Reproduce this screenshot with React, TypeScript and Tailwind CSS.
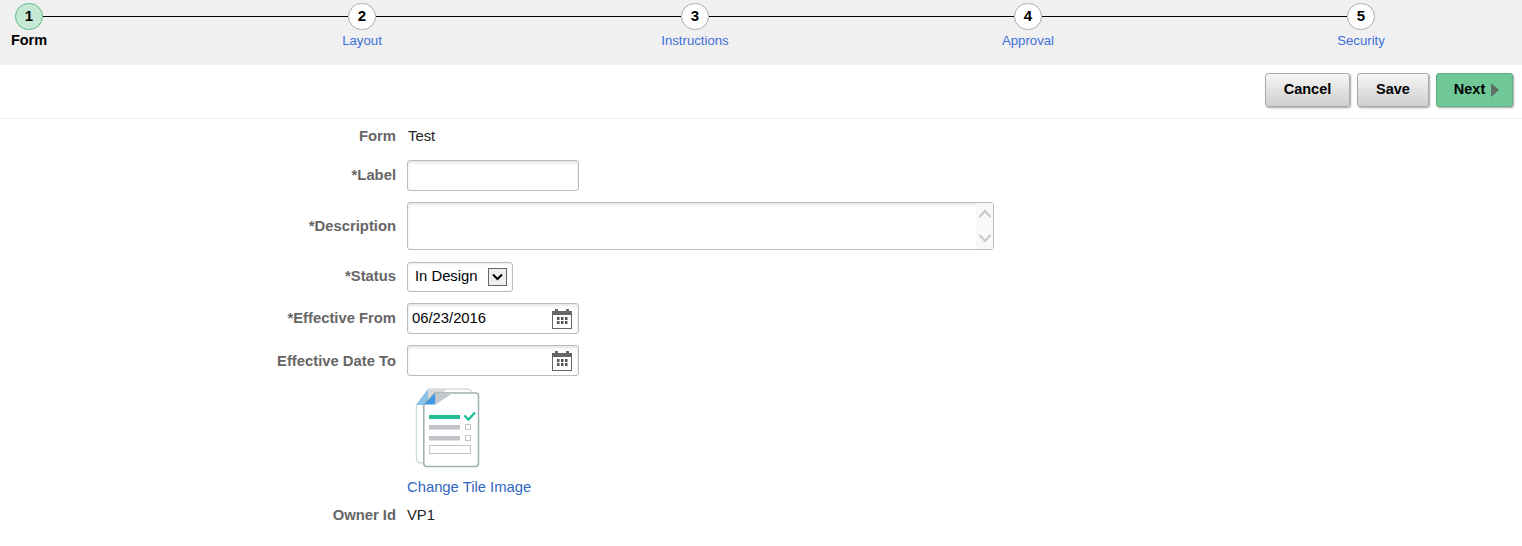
import React from "react";

const font = { fontFamily: '"Liberation Sans", Arial, sans-serif' };

function Step({ n, label, active, last }: { n: number; label: string; active?: boolean; last?: boolean }) {
  return (
    <div className={last ? "flex w-[28px] items-start" : "flex w-[333px] items-start"}>
      <div className="flex w-[28px] shrink-0 flex-col items-center">
        <div
          className={
            active
              ? "flex h-[27px] w-[28px] items-center justify-center rounded-full border border-[#62b98a] bg-[#c4e8d3] text-[15px] font-bold text-black"
              : "flex h-[27px] w-[28px] items-center justify-center rounded-full border border-[#aaaaaa] bg-white text-[15px] font-bold text-black"
          }
        >
          {n}
        </div>
        <div
          className={
            active
              ? "mt-[1px] whitespace-nowrap text-[14.5px] leading-[18px] font-bold text-black"
              : "mt-[2px] whitespace-nowrap text-[13.2px] leading-[18px] text-[#3f6fd8]"
          }
        >
          {label}
        </div>
      </div>
      {!last && <div className="mt-[13px] h-px flex-1 bg-black" />}
    </div>
  );
}

function Button({ children, wide, primary }: { children: React.ReactNode; wide: string; primary?: boolean }) {
  return (
    <div
      className={
        (primary
          ? "border-[#5fae84] bg-[#6fc896] pl-[4px] "
          : "border-[#aaaaaa] bg-gradient-to-b from-[#f6f6f6] to-[#cfcfcf] ") +
        "flex h-[34px] items-center justify-center rounded-[3px] border text-[14.5px] font-bold text-black shadow-[1px_1px_2px_rgba(0,0,0,0.35)] " +
        wide
      }
    >
      {children}
    </div>
  );
}

function Row({
  label,
  children,
  className,
  labelClass = "",
}: {
  label?: string;
  children: React.ReactNode;
  className: string;
  labelClass?: string;
}) {
  return (
    <div className={"flex items-center " + className}>
      <div className={"w-[396px] shrink-0 text-right text-[14.8px] font-bold text-[#666666] " + labelClass}>{label}</div>
      <div className="ml-[11px]">{children}</div>
    </div>
  );
}

function Calendar() {
  return (
    <svg width="20" height="20" viewBox="0 0 20 20" className="shrink-0">
      <rect x="0.5" y="2.5" width="19" height="17" fill="#fff" stroke="#666" />
      <rect x="0" y="2" width="20" height="4" fill="#666" />
      <rect x="3" y="0" width="3" height="3" fill="#666" />
      <rect x="14" y="0" width="3" height="3" fill="#666" />
      {[5, 9, 13].map((x) =>
        [8, 12].map((y) => <rect key={x + "-" + y} x={x} y={y} width="2.5" height="3" fill="#555" />)
      )}
    </svg>
  );
}

function DateField({ value }: { value?: string }) {
  return (
    <div className="flex h-[31px] w-[172px] items-center justify-between rounded-[3px] border border-[#bbbbbb] pr-[6px] pl-[4px] text-[14.8px] text-black shadow-[inset_0_2px_3px_rgba(0,0,0,0.1)]">
      <span>{value}</span>
      <Calendar />
    </div>
  );
}

function TileImage() {
  return (
    <svg width="80" height="80" viewBox="0 0 80 80" className="block">
      <path d="M9.5 17.5 L22 1 H60 Q64.5 1 64.5 5 V71 Q64.5 75 60 75 H14 Q9.5 75 9.5 71 Z" fill="#fff" stroke="#d3dcdc" strokeWidth="1.5" />
      <path d="M9 17 L21 1 V17 Z" fill="#8cc1ea" />
      <path d="M21 1 H40 L21 17 Z" fill="#d5d8dc" />
      <path d="M16.8 17 L28 5 H68.5 Q71.5 5 71.5 8 V75.5 Q71.5 78.5 68.5 78.5 H19.8 Q16.8 78.5 16.8 75.5 Z" fill="#fff" stroke="#9fb0ae" strokeWidth="1.5" />
      <path d="M17 16.5 L28.5 5 V16.5 Z" fill="#3f97e0" />
      <path d="M28.5 5 H46 L28.5 16.5 Z" fill="#c3c8cd" />
      <rect x="22" y="27" width="31" height="4" fill="#20bd97" />
      <path d="M57.5 27.5 L61.5 31.5 L68 24.5" fill="none" stroke="#20bd97" strokeWidth="2.4" />
      <rect x="22" y="37" width="31" height="4.5" fill="#c0c4c9" />
      <rect x="22" y="48" width="31" height="4.5" fill="#c0c4c9" />
      <rect x="58.5" y="36.5" width="5" height="5" fill="#fff" stroke="#c0c4c9" />
      <rect x="58.5" y="47.5" width="5" height="5" fill="#fff" stroke="#c0c4c9" />
      <rect x="22.5" y="57.5" width="41" height="8" fill="#fff" stroke="#c0c4c9" />
    </svg>
  );
}

export default function App() {
  return (
    <div className="min-h-[546px] bg-white text-black" style={font}>
      <div className="flex h-[65px] bg-[#f0f0f0] pt-[3px] pl-[15px]">
        <Step n={1} label="Form" active />
        <Step n={2} label="Layout" />
        <Step n={3} label="Instructions" />
        <Step n={4} label="Approval" />
        <Step n={5} label="Security" last />
      </div>
      <div className="flex h-[54px] justify-end gap-[7px] border-b border-[#eeeeee] pt-[8px] pr-[9px]">
        <Button wide="w-[85px]">Cancel</Button>
        <Button wide="w-[72px]">Save</Button>
        <Button wide="w-[77px]" primary>
          Next
          <svg width="8" height="14" viewBox="0 0 8 14" className="ml-[6px]">
            <path d="M0 0 L8 7 L0 14 Z" fill="#5f6f66" />
          </svg>
        </Button>
      </div>
      <Row label="Form" className="mt-[7px] h-[20px]">
        <span className="pl-px text-[14.8px] text-[#222222]">Test</span>
      </Row>
      <Row label="*Label" className="mt-[14px]">
        <div className="h-[31px] w-[172px] rounded-[3px] border border-[#bbbbbb] shadow-[inset_0_2px_3px_rgba(0,0,0,0.1)]" />
      </Row>
      <Row label="*Description" className="mt-[11px]">
        <div className="flex h-[48px] w-[587px] justify-end rounded-[3px] border border-[#bbbbbb] shadow-[inset_0_2px_3px_rgba(0,0,0,0.1)]">
          <div className="flex w-[17px] flex-col items-center justify-between bg-[#f8f8f8] py-[6px]">
            <svg width="14" height="10" viewBox="0 0 14 10">
              <path d="M1.5 8 L7 2 L12.5 8" fill="none" stroke="#c8c8c8" strokeWidth="2" />
            </svg>
            <svg width="14" height="10" viewBox="0 0 14 10">
              <path d="M1.5 2 L7 8 L12.5 2" fill="none" stroke="#c8c8c8" strokeWidth="2" />
            </svg>
          </div>
        </div>
      </Row>
      <Row label="*Status" className="mt-[12px]" labelClass="pb-[2px]">
        <div className="flex h-[30px] w-[106px] items-center justify-between rounded-[3px] border border-[#bbbbbb] pr-[5px] pl-[7px] text-[14.8px] text-black shadow-[inset_0_1px_2px_rgba(0,0,0,0.08)]">
          <span className="pb-[2px]">In Design</span>
          <div className="flex h-[18px] w-[19px] items-center justify-center border border-[#666666] bg-[#eeeeee]">
            <svg width="11" height="8" viewBox="0 0 11 8">
              <path d="M1 1.5 L5.5 6 L10 1.5" fill="none" stroke="#000" strokeWidth="2" />
            </svg>
          </div>
        </div>
      </Row>
      <Row label="*Effective From" className="mt-[11px]">
        <DateField value="06/23/2016" />
      </Row>
      <Row label="Effective Date To" className="mt-[11px]" labelClass="pt-[2px]">
        <DateField />
      </Row>
      <div className="mt-[12px] ml-[407px]">
        <TileImage />
      </div>
      <div className="mt-[10px] ml-[407px] text-[14.8px] leading-[18px] text-[#2f66c4]">Change Tile Image</div>
      <Row label="Owner Id" className="mt-[9px] h-[20px]">
        <span className="text-[14.8px] text-[#222222]">VP1</span>
      </Row>
    </div>
  );
}
